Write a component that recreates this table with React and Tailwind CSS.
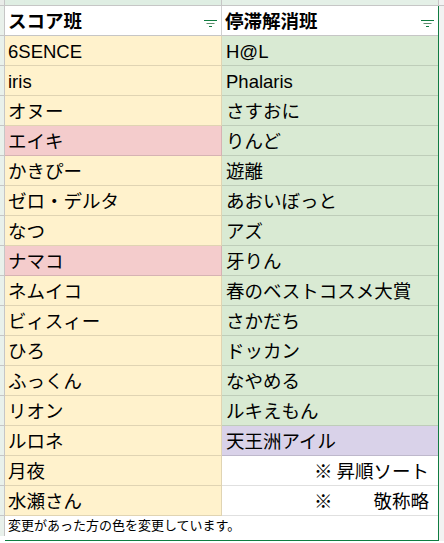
const rows = [
  { a: "6SENCE", b: "H@L" },
  { a: "iris", b: "Phalaris" },
  { a: "オヌー", b: "さすおに" },
  { a: "エイキ", b: "りんど", aBg: "bg-[#f4cccc]" },
  { a: "かきぴー", b: "遊離" },
  { a: "ゼロ・デルタ", b: "あおいぼっと" },
  { a: "なつ", b: "アズ" },
  { a: "ナマコ", b: "牙りん", aBg: "bg-[#f4cccc]" },
  { a: "ネムイコ", b: "春のベストコスメ大賞" },
  { a: "ビィスィー", b: "さかだち" },
  { a: "ひろ", b: "ドッカン" },
  { a: "ふっくん", b: "なやめる" },
  { a: "リオン", b: "ルキえもん" },
  { a: "ルロネ", b: "天王洲アイル", bBg: "bg-[#d9d2e9]" },
  { a: "月夜", note: "昇順ソート" },
  { a: "水瀬さん", note: "敬称略" },
];

function FilterIcon() {
  return (
    <svg width="13" height="8" viewBox="0 0 13 8" className="shrink-0">
      <rect x="0" y="0" width="13" height="1" fill="#107c41" />
      <rect x="2.5" y="3" width="8" height="1" fill="#5f8f6f" />
      <rect x="5" y="6" width="3" height="1" fill="#107c41" />
    </svg>
  );
}

function HeaderCell({ label, last }) {
  return (
    <div
      className={`h-[30px] flex items-end justify-between pl-[3px] pr-[4px] pb-[3px] bg-white border-b border-[#c6c6c6] ${
        last ? "" : "border-r border-r-[#d0d0d0]"
      }`}
    >
      <span className="text-[18.5px] font-bold leading-none pb-[1px] text-black">{label}</span>
      <div className="pb-[4px]">
        <FilterIcon />
      </div>
    </div>
  );
}

export default function App() {
  return (
    <div
      className="w-[444px] h-[543px] bg-white overflow-hidden text-black"
      style={{ fontFamily: "'Liberation Sans', 'Noto Sans CJK JP', sans-serif" }}
    >
      {/* column header strip */}
      <div className="flex h-[6px] bg-[#f2f2f2]">
        <div className="w-[5px] border-r border-b border-[#c6c6c6] bg-[#e9ece9]" />
        <div className="w-[217px] border-r border-b border-[#c6c6c6] bg-[#dfeee3]" />
        <div className="w-[217px] border-r border-b border-[#c6c6c6] bg-[#e4f0e7]" />
        <div className="flex-1 border-b border-[#c6c6c6]" />
      </div>

      <div className="flex">
        {/* row header strip */}
        <div className="w-[5px] flex flex-col">
          <div className="h-[30px] border-r border-b border-[#c6c6c6] bg-[#e9f1eb]" />
          {rows.map((_, i) => (
            <div key={i} className="h-[30px] border-r border-b border-[#c6c6c6] bg-[#e9f1eb]" />
          ))}
          <div className="h-[20px] border-r border-[#c6c6c6] bg-[#e9f1eb]" />
        </div>

        {/* table */}
        <div className="w-[434px] border-r border-b border-[#107c41]">
          <div className="grid grid-cols-[217px_216px]">
            <HeaderCell label="スコア班" />
            <HeaderCell label="停滞解消班" last />
            {rows.map((r, i) => (
              <div key={i} className="contents">
                <div
                  className={`h-[30px] flex items-center pl-[3px] pt-[2px] text-[18.5px] border-b border-r border-black/[0.12] ${
                    r.aBg || "bg-[#fff2cc]"
                  }`}
                >
                  {r.a}
                </div>
                {r.note ? (
                  <div className="h-[30px] flex items-center justify-between pl-[92px] pr-[9px] pt-[2px] text-[18.5px] bg-white border-b border-black/[0.12]">
                    <span>※</span>
                    <span>{r.note}</span>
                  </div>
                ) : (
                  <div
                    className={`h-[30px] flex items-center pl-[4px] pt-[2px] text-[18.5px] border-b border-black/[0.12] ${
                      r.bBg || "bg-[#d9ead3]"
                    }`}
                  >
                    {r.b}
                  </div>
                )}
              </div>
            ))}
          </div>
          <div className="h-[19px] flex items-center pl-[3px] text-[13px] leading-none bg-white">
            変更があった方の色を変更しています。
          </div>
        </div>
        <div className="flex-1 h-[535px] bg-[#f2f2f2]" />
      </div>
    </div>
  );
}
